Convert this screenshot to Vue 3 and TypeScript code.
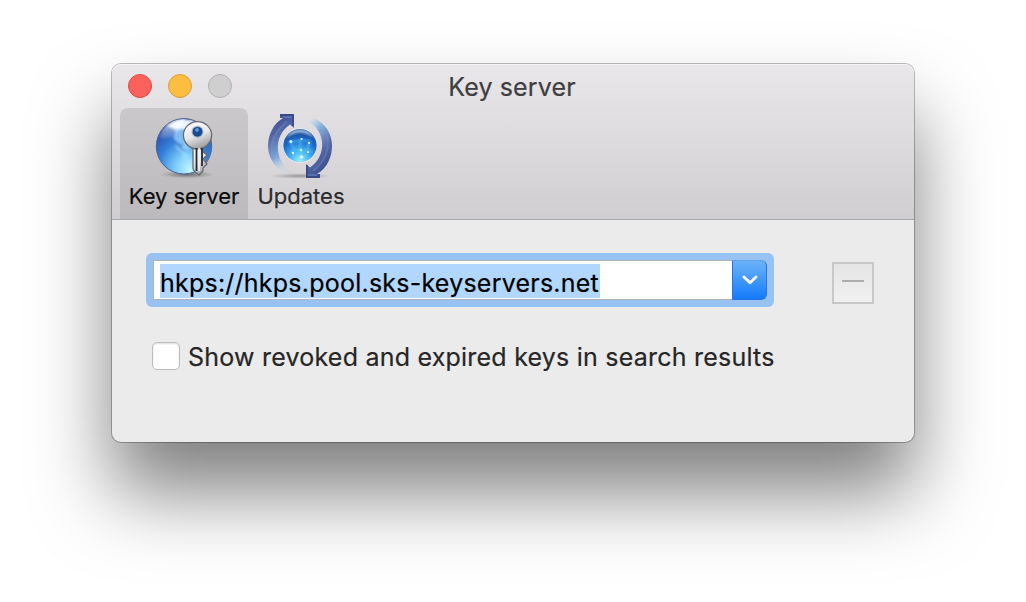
<script setup lang="ts">
import { ref } from 'vue'

const server = 'hkps://hkps.pool.sks-keyservers.net'
const showRevoked = ref(false)
const activeTab = ref('server')
</script>

<template>
  <main class="desktop">
    <section class="window">
      <header class="toolbar">
        <div class="titlebar">
          <div class="lights">
            <i class="light close"></i>
            <i class="light minimize"></i>
            <i class="light disabled"></i>
          </div>
          <h1 class="title">Key server</h1>
        </div>
        <nav class="tabs">
          <button class="tab tab-server" :class="{ active: activeTab === 'server' }" @click="activeTab = 'server'">
            <svg class="icon" viewBox="0 0 64 64">
              <defs>
                <radialGradient id="globe" cx="0.62" cy="0.92" r="0.95">
                  <stop offset="0" stop-color="#c2f9ff" />
                  <stop offset="0.3" stop-color="#7dcbfa" />
                  <stop offset="0.62" stop-color="#337fd8" />
                  <stop offset="1" stop-color="#283f9c" />
                </radialGradient>
                <linearGradient id="gloss" x1="0" y1="0" x2="0" y2="1">
                  <stop offset="0" stop-color="#fff" stop-opacity="0.85" />
                  <stop offset="1" stop-color="#fff" stop-opacity="0.1" />
                </linearGradient>
                <linearGradient id="steel" x1="0" y1="0" x2="0.4" y2="1">
                  <stop offset="0" stop-color="#ffffff" />
                  <stop offset="0.6" stop-color="#e6e6e8" />
                  <stop offset="1" stop-color="#a5a5a8" />
                </linearGradient>
                <radialGradient id="ground">
                  <stop offset="0" stop-color="#333" stop-opacity="0.6" />
                  <stop offset="1" stop-color="#555" stop-opacity="0" />
                </radialGradient>
                <filter id="soft"><feGaussianBlur stdDeviation="0.8" /></filter>
                <clipPath id="globe-clip"><circle cx="32" cy="32.3" r="27.3" /></clipPath>
              </defs>
              <ellipse cx="35" cy="60.5" rx="27" ry="4" fill="url(#ground)" />
              <circle cx="32" cy="32.3" r="27.7" fill="url(#globe)" stroke="#496594" stroke-width="1" />
              <g clip-path="url(#globe-clip)" filter="url(#soft)">
                <path d="M19 13 26 8 43 7 53 19 44 25 39 33 35 31 30 34 26 29 21 24 24 18Z" fill="#94cefa" opacity="0.8" />
                <path d="M23 28 29 32 36 30 38 35 33 37 37 42 35 50 31 46 30 39 24 34Z" fill="#a2e0ff" opacity="0.6" />
                <path d="M21 24 26 29 32 31 29 33 35 38 31 37 24 31Z" fill="#2967b8" opacity="0.6" />
                <path d="M51 31 60 27 59 44 52 52Z" fill="#276bbd" opacity="0.75" />
                <path d="M7 24Q26 28 33 4Q13 4 7 24Z" fill="url(#gloss)" />
                <path d="M15 12Q29 2 44 7L35 15Q22 16 15 12Z" fill="#fff" opacity="0.85" />
              </g>
              <g stroke="#666a70" stroke-width="1.3" stroke-linejoin="round">
                <path d="M41 32H51V38L55 41 51 45 55 50 51 54V57L47 61 43 58 41 55Z" fill="url(#steel)" />
                <ellipse cx="45.5" cy="21.3" rx="14.1" ry="13.7" fill="url(#steel)" />
              </g>
              <path d="M44.5 34V57M50 34V52" stroke="#242a30" stroke-width="1.8" />
              <path d="M47 34V57" stroke="#f2f2f2" stroke-width="1.6" />
              <circle cx="45.5" cy="17.8" r="6" fill="#a4b6c7" />
              <circle cx="45.5" cy="17.8" r="4.9" fill="#194b8d" />
              <circle cx="45" cy="16" r="1.9" fill="#5b9edc" />
            </svg>
            <span>Key server</span>
          </button>
          <button class="tab tab-updates" :class="{ active: activeTab === 'updates' }" @click="activeTab = 'updates'">
            <svg class="icon icon-updates" viewBox="0 0 64 64">
              <defs>
                <linearGradient id="arrow-left" x1="0" y1="0" x2="0.25" y2="1">
                  <stop offset="0" stop-color="#354587" />
                  <stop offset="0.4" stop-color="#5469a8" />
                  <stop offset="0.75" stop-color="#7ea6d8" />
                  <stop offset="1" stop-color="#b4d1ee" stop-opacity="0.15" />
                </linearGradient>
                <linearGradient id="arrow-right" x1="0.25" y1="0" x2="0.7" y2="1">
                  <stop offset="0" stop-color="#bad8f1" stop-opacity="0.3" />
                  <stop offset="0.22" stop-color="#8ab2dd" />
                  <stop offset="0.58" stop-color="#5469aa" />
                  <stop offset="1" stop-color="#344585" />
                </linearGradient>
                <radialGradient id="orb" cx="0.5" cy="0.95" r="0.9">
                  <stop offset="0" stop-color="#98f2ff" />
                  <stop offset="0.35" stop-color="#41adf2" />
                  <stop offset="0.72" stop-color="#1c64c4" />
                  <stop offset="1" stop-color="#234a94" />
                </radialGradient>
              </defs>
              <ellipse cx="32" cy="62" rx="32" ry="3" fill="url(#ground)" opacity="0.65" />
              <path d="M12 0H26V14L22 10.5C14 16 9 25 10 36C11 46 16 53 24 58L18 60C6 53 0 43 0 32C0 21 5 10 15 4H12Z" fill="url(#arrow-left)" />
              <path d="M5 45C1 30 6 18 19 8" fill="none" stroke="#8394c4" stroke-width="2" opacity="0.4" />
              <path d="M13 1H25M25 1V12" stroke="#34447f" stroke-width="1.5" />
              <path d="M15 3H24" stroke="#7188c2" stroke-width="1" />
              <path d="M46 4C58 10 64 20 64 32C64 43 59 54 49 60H52V64H38V50L42 53.5C50 48 55 39 54 28C53 20 49 12 41 8Z" fill="url(#arrow-right)" />
              <path d="M58 18C63 32 58 47 45 57" fill="none" stroke="#8795c0" stroke-width="2" opacity="0.35" />
              <path d="M39 51V63H51" fill="none" stroke="#334481" stroke-width="1.5" />
              <path d="M40 61H49" stroke="#6582c5" stroke-width="1.2" />
              <circle cx="32" cy="31.5" r="17.5" fill="#e5edf5" opacity="0.75" />
              <circle cx="32" cy="31.5" r="16.6" fill="url(#orb)" />
              <path d="M18 24Q32 13 46 24Q42 15.5 32 15.5Q22 15.5 18 24Z" fill="#d1e6f7" opacity="0.75" filter="url(#soft)" />
              <path d="M22 28 34 26 42 27 39 36 33 38 26 35ZM32 27V39L34 46M26 35 23 39M40 35 44 38" fill="none" stroke="#55caff" stroke-width="2" opacity="0.6" filter="url(#soft)" />
              <g fill="#e2fbff">
                <circle cx="22.8" cy="27.5" r="1.5" /><circle cx="33.5" cy="25" r="1.1" />
                <circle cx="41" cy="29" r="1" /><circle cx="33" cy="36" r="1.3" />
                <circle cx="25" cy="39" r="1.2" /><circle cx="40" cy="38" r="1.1" />
                <circle cx="33.5" cy="43" r="1.8" />
              </g>
            </svg>
            <span>Updates</span>
          </button>
        </nav>
      </header>
      <div class="content">
        <div class="server-row">
          <div class="combo">
            <div class="field"><span class="selected">{{ server }}</span></div>
            <button class="chevron" aria-label="Show servers">
              <svg width="16" height="10" viewBox="0 0 16 10"><path d="m2 2 6 5.8L14 2" /></svg>
            </button>
          </div>
          <button class="remove" aria-label="Remove server"><i></i></button>
        </div>
        <label class="option">
          <input v-model="showRevoked" type="checkbox" />
          <span>Show revoked and expired keys in search results</span>
        </label>
      </div>
    </section>
  </main>
</template>

<style>
html, body { background: #fff; overflow: hidden; }
</style>

<style scoped>
* { box-sizing: border-box; }
.desktop {
  width: 1026px; height: 602px; padding: 64px 112px 0;
  overflow: hidden; background: #fff;
  font-family: Inter, "Liberation Sans", sans-serif;
  -webkit-text-stroke: .2px currentColor;
}
button { border: 0; padding: 0; margin: 0; background: none; font: inherit; color: inherit; }
.window {
  width: 802px; height: 378px; border-radius: 9px; background: #ebebeb;
  box-shadow: 0 0 0 1px rgba(0, 0, 0, .26), 0 50px 78px rgba(0, 0, 0, .5);
}
.toolbar {
  height: 156px; border-bottom: 1px solid #a9a8aa; border-radius: 9px 9px 0 0;
  background: linear-gradient(#e9e7ea, #d0ced1); box-shadow: inset 0 1px #f5f4f5;
}
.titlebar { display: grid; grid-template-columns: 120px 1fr 120px; height: 44px; }
.lights { display: flex; gap: 16px; padding: 10px 0 0 16px; }
.light { flex: none; width: 24px; height: 24px; border-radius: 50%; }
.close { background: #fc615c; border: 1px solid #df4945; }
.minimize { background: #fdbd40; border: 1px solid #dd9e35; }
.disabled { background: #cfcfcf; border: 1px solid #b1b1b1; }
.title {
  margin: 0; padding: 7px 2px 0 0; text-align: center; color: #3f3e40;
  font-size: 25px; line-height: 32px; font-weight: 400; letter-spacing: .15px; white-space: nowrap;
}
.tabs { display: flex; padding-left: 8px; }
.tab {
  display: flex; flex-direction: column; align-items: center; height: 111px; padding-top: 6px;
  font-size: 22px; line-height: 28px; color: #2b2a2c; white-space: nowrap;
}
.tab-server { width: 128px; letter-spacing: -.05px; }
.tab-updates { width: 106px; }
.active { background: linear-gradient(#cac8cb, #bbb9bb); border-radius: 8px 8px 0 0; color: #0b0b0b; }
.icon { display: block; width: 64px; height: 64px; margin-bottom: 4px; flex: none; }
.icon-updates { margin-right: 2px; }
.content { padding: 33px 34px; }
.server-row { display: flex; justify-content: space-between; padding-right: 6px; }
.combo {
  display: flex; width: 628px; height: 54px; padding: 7px; border-radius: 6px; background: #97c2f1;
}
.field {
  flex: 1; height: 40px; padding: 3px 0 0 6px; background: #fff;
  border: 1px solid #aeb2b7; border-right: 0; white-space: nowrap;
}
.selected {
  display: block; width: 440px; height: 34px; background: #b2d7fe; color: #000;
  font-size: 25px; line-height: 38px; letter-spacing: .23px;
}
.chevron {
  display: flex; align-items: center; justify-content: center; width: 35px; height: 40px;
  border: 1px solid #2674ec; border-top-color: #5aa2ee; border-radius: 0 6px 6px 0;
  background: linear-gradient(#6bb3f8, #157bfb);
}
.chevron path { fill: none; stroke: #fff; stroke-width: 2.8; stroke-linecap: round; stroke-linejoin: round; }
.remove {
  display: flex; align-items: center; justify-content: center; width: 42px; height: 42px; margin-top: 9px;
  border: 2px solid #c8c8c8; background: linear-gradient(#e5e5e5, #f0f0f0);
}
.remove i { width: 22px; height: 2px; margin-bottom: 4px; background: #ababab; }
.option {
  display: flex; align-items: center; height: 36px; margin-top: 31px; padding-left: 6px; gap: 8px;
  color: #262626; font-size: 25px; line-height: 36px; letter-spacing: .22px; white-space: nowrap;
}
.option span { padding-top: 2px; }
.option input {
  appearance: none; flex: none; width: 28px; height: 28px; margin: 0;
  border: 1px solid #bcbcbc; border-radius: 5px; background: #fff; box-shadow: inset 0 1px 2px #ddd;
}
</style>
